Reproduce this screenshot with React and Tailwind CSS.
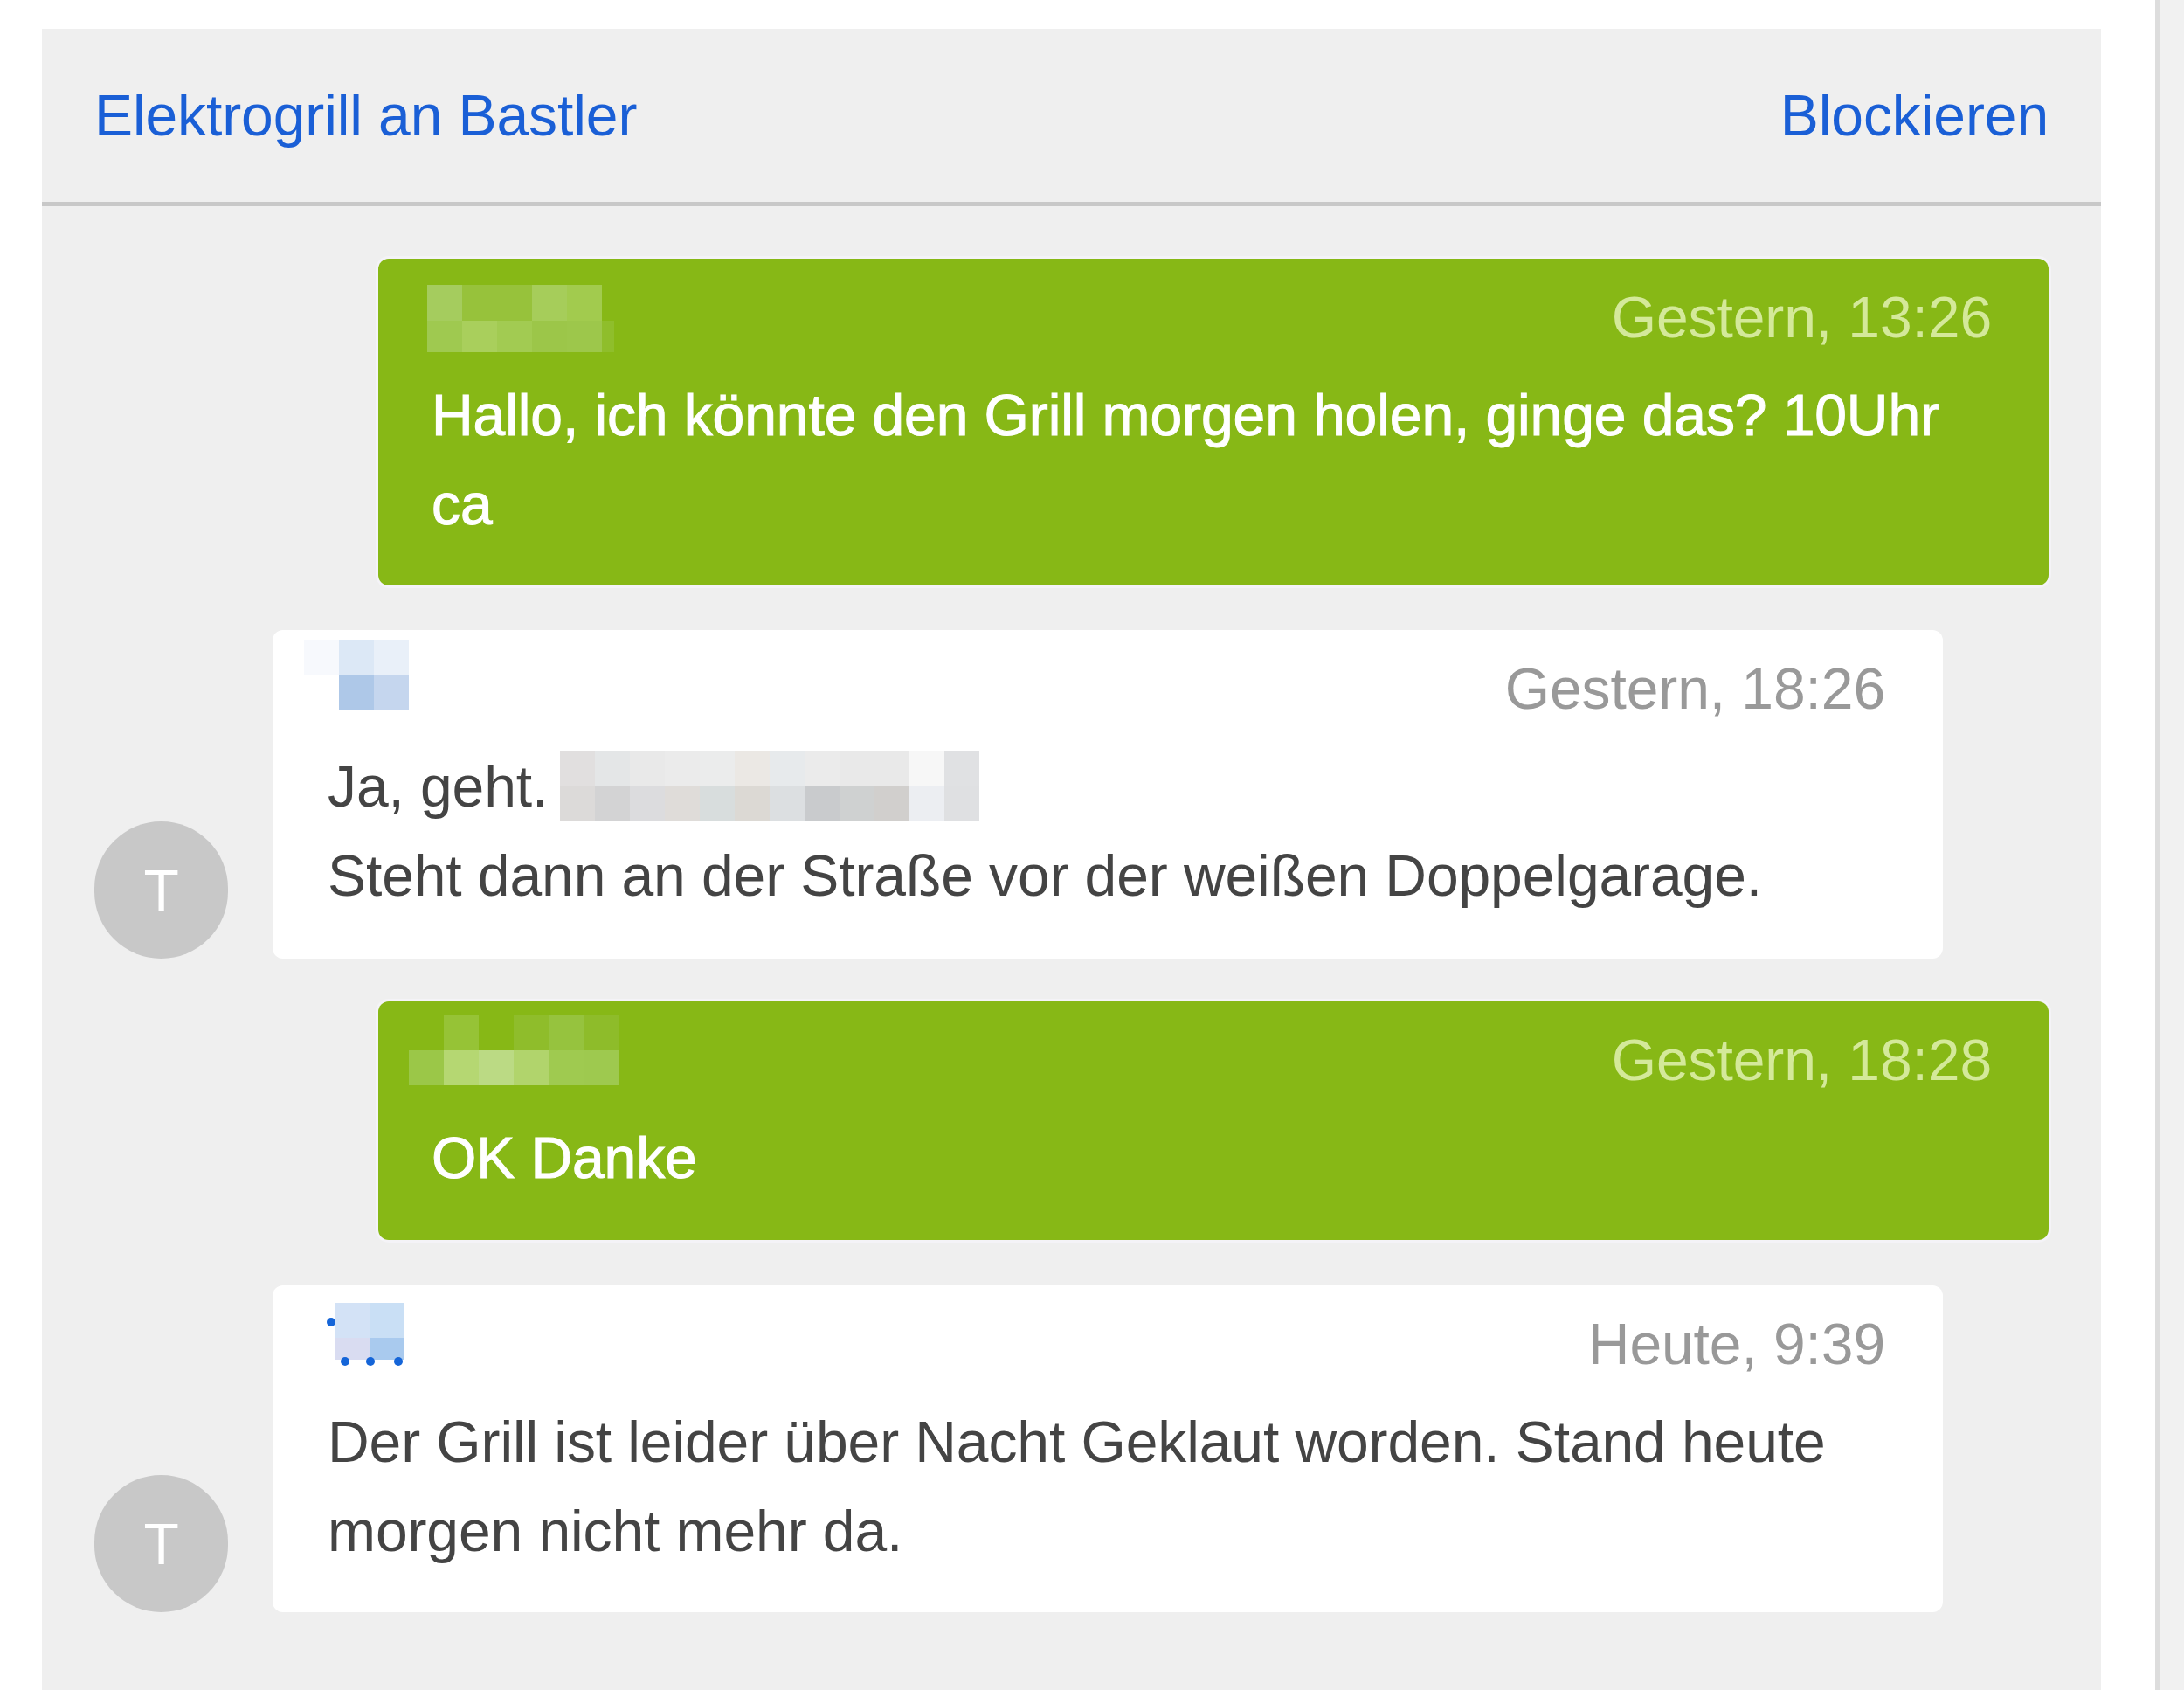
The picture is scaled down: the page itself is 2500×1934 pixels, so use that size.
import React from 'react';

const PixelBlur = ({ rows, cell = 'w-[40px]', rowHeights = [], className = '', children }) => (
  <div className={`relative shrink-0 ${className}`}>
    {rows.map((row, i) => (
      <div key={i} className={`flex ${rowHeights[i]}`}>
        {row.map((color, j) => (
          <div key={j} className={`${cell} ${color}`} />
        ))}
      </div>
    ))}
    {children}
  </div>
);

const Avatar = () => (
  <div className="w-[153px] h-[157px] shrink-0 rounded-full bg-[#c8c8c8] text-white flex items-center justify-center">
    T
  </div>
);

const Mine = ({ blur, time, className = 'pb-[42px]', children }) => (
  <div className="flex justify-end">
    <div className={`w-[1912px] rounded-[12px] bg-[#87b816] pl-[61px] pr-[65px] pt-[16px] shadow-[0_0_0_3px_#f4f3f7] ${className}`}>
      <div className="flex justify-between items-start h-[102px]">
        {blur}
        <span className="text-[#d4e99a]">{time}</span>
      </div>
      <div className="mt-[10px] text-white [-webkit-text-stroke:1px_white]">{children}</div>
    </div>
  </div>
);

const Theirs = ({ blur, time, pad = 'pb-[42px]', className = '', children }) => (
  <div className={`flex items-end gap-[51px] ${className}`}>
    <Avatar />
    <div className={`w-[1912px] rounded-[12px] bg-white pl-[63px] pr-[66px] pt-[16px] ${pad}`}>
      <div className="flex justify-between items-start h-[102px]">
        {blur}
        <span className="text-[#999999]">{time}</span>
      </div>
      <div className="mt-[10px] text-[#444444]">{children}</div>
    </div>
  </div>
);

const Dot = ({ className }) => (
  <span className={`absolute w-[10px] h-[10px] rounded-full bg-[#1565d8] ${className}`} />
);

export default function App() {
  return (
    <div className="flex h-[1934px] w-[2500px] overflow-hidden bg-white font-['Liberation_Sans',Arial,sans-serif] text-[66px] leading-[102px] tracking-[-0.1px]">
      <div className="ml-[48px] mt-[33px] w-[2357px] bg-[#efefef]">
        <div className="flex justify-between items-center h-[203px] px-[60px] border-b-[5px] border-[#c8c8c8] text-[#1a5fd6]">
          <a href="#">Elektrogrill an Bastler</a>
          <a href="#">Blockieren</a>
        </div>

        <div className="flex flex-col px-[60px] pt-[60px]">
          <Mine
            time="Gestern, 13:26"
            blur={
              <PixelBlur
                className="ml-[-5px] mt-[14px]"
                rowHeights={['h-[41px]', 'h-[36px]']}
                rows={[
                  ['bg-[#a5cc5e]', 'bg-[#97c23b]', 'bg-[#97c23b]', 'bg-[#a6cd5a]', 'bg-[#a2cb4e]'],
                  ['bg-[#9fc950]', 'bg-[#a9cf5c]', 'bg-[#a2cb52]', 'bg-[#9cc649]', 'bg-[#9dc74b]'],
                ]}
              >
                <span className="absolute left-[200px] top-[41px] w-[14px] h-[36px] bg-[#8fbe2b]" />
              </PixelBlur>
            }
          >
            Hallo, ich könnte den Grill morgen holen, ginge das? 10Uhr
            <br />
            ca
          </Mine>

          <Theirs
            className="mt-[51px]"
            pad="pb-[44px]"
            time="Gestern, 18:26"
            blur={
              <PixelBlur
                className="ml-[-27px] mt-[-5px]"
                rowHeights={['h-[40px]', 'h-[41px]']}
                rows={[
                  ['bg-[#f7f9fd]', 'bg-[#dce8f6]', 'bg-[#e9f0f9]'],
                  ['bg-white', 'bg-[#aec8e8]', 'bg-[#c5d6ee]'],
                ]}
              />
            }
          >
            <div className="flex items-center h-[102px]">
              <span className="whitespace-pre">Ja, geht. </span>
              <PixelBlur
                className="ml-[-5px] mt-[-2px]"
                rowHeights={['h-[41px]', 'h-[40px]']}
                rows={[
                  ['bg-[#e1dfdf]', 'bg-[#e4e6e7]', 'bg-[#e9e9e9]', 'bg-[#ebebeb]', 'bg-[#ebecec]', 'bg-[#ebe8e4]', 'bg-[#e7eaec]', 'bg-[#ebebeb]', 'bg-[#e9e9e9]', 'bg-[#e9e9e9]', 'bg-[#f7f7f7]', 'bg-[#e0e1e3]'],
                  ['bg-[#dcdad9]', 'bg-[#d3d3d4]', 'bg-[#dcdcde]', 'bg-[#dfdcd9]', 'bg-[#d8dddd]', 'bg-[#dcd9d4]', 'bg-[#dcdfe1]', 'bg-[#c9cbcd]', 'bg-[#cfd1d1]', 'bg-[#d1cfcd]', 'bg-[#eceef2]', 'bg-[#dfe0e2]'],
                ]}
              />
            </div>
            Steht dann an der Straße vor der weißen Doppelgarage.
          </Theirs>

          <div className="mt-[49px]">
            <Mine
              className="pb-[43px]"
              time="Gestern, 18:28"
              blur={
                <PixelBlur
                  className="ml-[-26px]"
                  rowHeights={['h-[40px]', 'h-[40px]']}
                  rows={[
                    ['bg-[#87b816]', 'bg-[#96c336]', 'bg-[#87b816]', 'bg-[#8fbd2b]', 'bg-[#96c33e]', 'bg-[#8ebc2a]'],
                    ['bg-[#9bc748]', 'bg-[#b5d772]', 'bg-[#bbda84]', 'bg-[#b1d46c]', 'bg-[#9fca50]', 'bg-[#9ec94f]'],
                  ]}
                />
              }
            >
              OK Danke
            </Mine>
          </div>

          <Theirs
            className="mt-[52px]"
            time="Heute, 9:39"
            blur={
              <PixelBlur
                className="ml-[8px] mt-[4px]"
                rowHeights={['h-[40px]', 'h-[25px]']}
                rows={[
                  ['bg-[#d3e2f6]', 'bg-[#c9dff5]'],
                  ['bg-[#d9dcf1]', 'bg-[#a9caee]'],
                ]}
              >
                <Dot className="left-[-9px] top-[17px]" />
                <Dot className="left-[7px] top-[62px]" />
                <Dot className="left-[36px] top-[62px]" />
                <Dot className="left-[68px] top-[62px]" />
              </PixelBlur>
            }
          >
            Der Grill ist leider über Nacht Geklaut worden. Stand heute
            <br />
            morgen nicht mehr da.
          </Theirs>
        </div>
      </div>

      <div className="ml-[62px] w-[5px] bg-[#dddddd]" />
      <div className="flex-1 bg-[#f1f1f1]" />
    </div>
  );
}
